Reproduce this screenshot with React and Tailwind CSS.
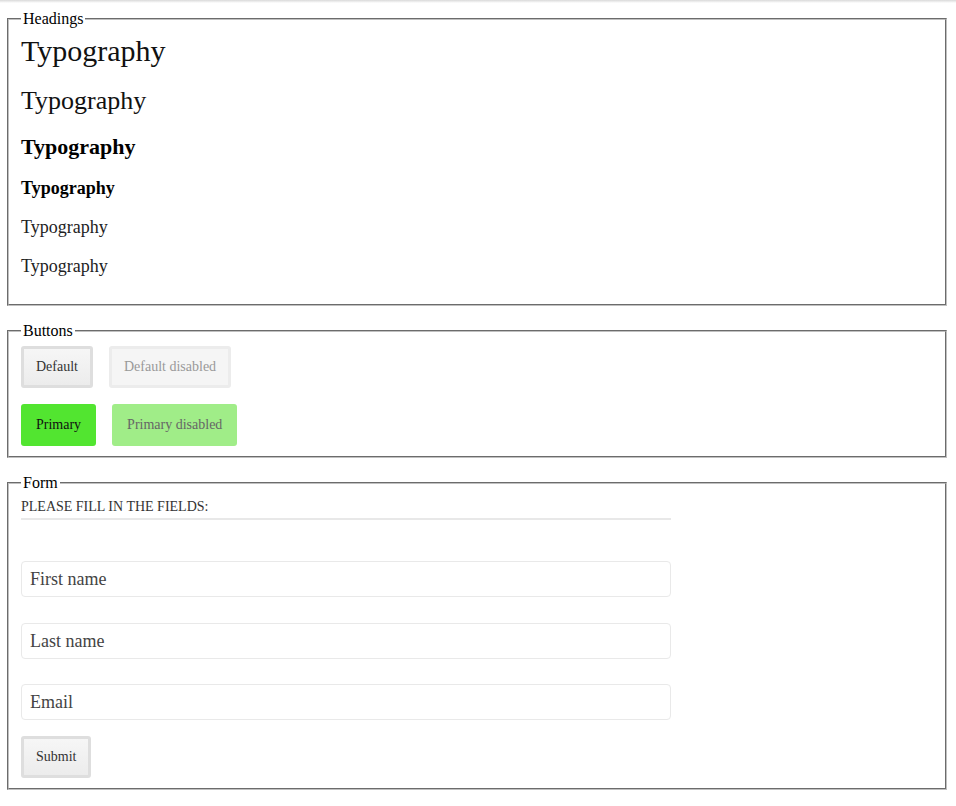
import React from 'react';

const Section = ({ title, className = '', children }) => (
  <fieldset
    className={`ml-[7px] mr-[9px] border-2 [border-style:groove] border-[#c0c0c0] px-3 ${className}`}
  >
    <legend className="px-[2px] text-base leading-[18px] text-black">{title}</legend>
    {children}
  </fieldset>
);

const buttonBase = 'h-[42px] rounded-[3px] text-sm leading-none';
const defaultBtn = `${buttonBase} border-[3px] border-[#dedede] bg-gradient-to-b from-[#f6f6f6] to-[#ececec] px-[12px] text-[#333]`;

const App = () => {
  return (
    <div className="min-h-[806px] bg-white font-['Liberation_Serif',serif] text-[#222]">
      {/* top shadow strip */}
      <div className="h-[3px] bg-gradient-to-b from-[#d9d9d9] to-white" />

      <div className="flex flex-col gap-4 pt-[7px]">
        <Section title="Headings" className="pb-[27px]">
          <h1 className="mt-[6px] text-[30px] leading-[34px] text-[#111]">Typography</h1>
          <h2 className="mt-[18px] text-[26px] leading-[30px] text-[#111]">Typography</h2>
          <h3 className="mt-[18px] text-[22px] font-bold leading-[26px] text-black">Typography</h3>
          <h4 className="mt-[17px] text-[18px] font-bold leading-[22px] text-black">Typography</h4>
          <h5 className="mt-[17px] text-[18px] leading-[22px] text-[#222]">Typography</h5>
          <h6 className="mt-[17px] text-[18px] leading-[22px] text-[#222]">Typography</h6>
        </Section>

        <Section title="Buttons" className="pb-[10px]">
          <div className="mt-[6px] flex gap-4">
            <button className={defaultBtn}>Default</button>
            <button
              disabled
              className={`${buttonBase} border-[3px] border-[#ececec] bg-[#f5f5f5] px-[12px] text-[#999]`}
            >
              Default disabled
            </button>
          </div>
          <div className="mt-[16px] flex gap-4">
            <button className={`${buttonBase} bg-[#52e530] px-[15px] text-[#111]`}>Primary</button>
            <button disabled className={`${buttonBase} bg-[#a0ed88] px-[15px] text-[#666]`}>
              Primary disabled
            </button>
          </div>
        </Section>

        <Section title="Form" className="pb-[10px]">
          <form className="w-[650px]" onSubmit={(e) => e.preventDefault()}>
            <div className="mt-[7px] border-b-2 border-[#e8e8e8] pb-[3px] text-[14px] uppercase leading-[16px] text-[#333]">
              Please fill in the fields:
            </div>
            <div className="mt-[41px] flex flex-col">
              {['First name', 'Last name', 'Email'].map((p, i) => (
                <input
                  key={p}
                  placeholder={p}
                  className={`h-[36px] w-full rounded-[4px] border border-[#e9e9e9] px-2 text-[18px] text-[#444] outline-none placeholder:text-[#444] ${
                    i === 1 ? 'mt-[26px]' : i === 2 ? 'mt-[25px]' : ''
                  }`}
                />
              ))}
            </div>
            <button type="submit" className={`${defaultBtn} mt-[16px]`}>
              Submit
            </button>
          </form>
        </Section>
      </div>
    </div>
  );
};

export default App;
